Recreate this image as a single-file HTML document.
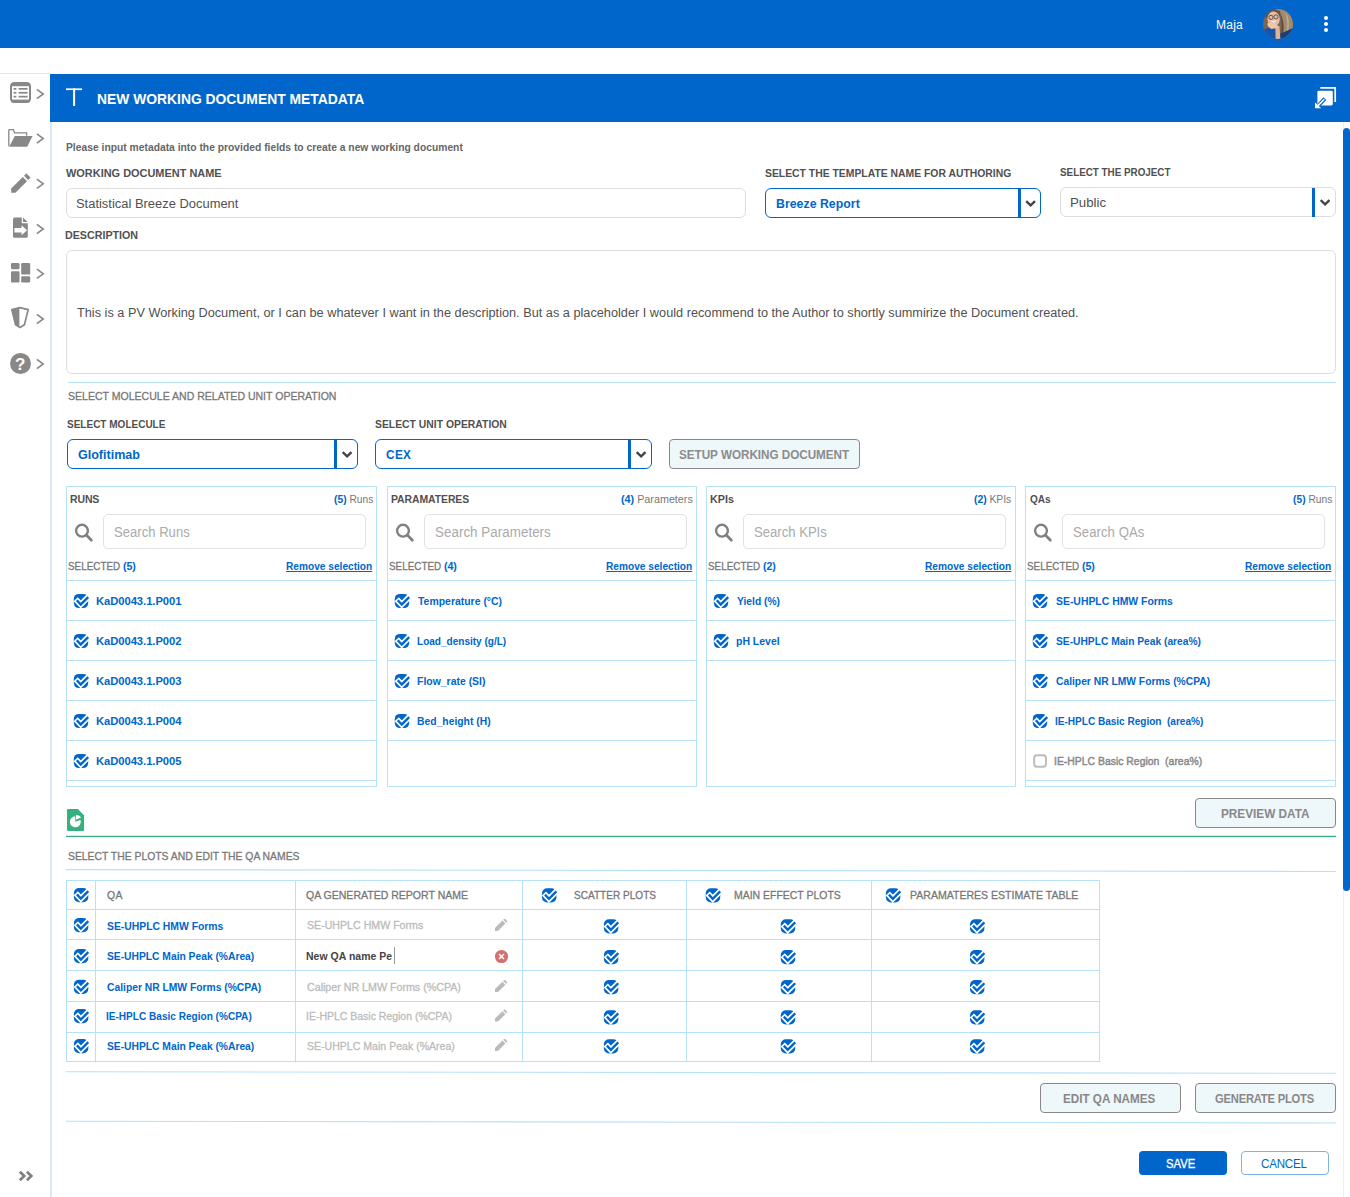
<!DOCTYPE html>
<html lang="en"><head><meta charset="utf-8"><title>New Working Document Metadata</title>
<style>
html,body{margin:0;padding:0;}
body{position:relative;width:1350px;height:1197px;overflow:hidden;background:#fff;font-family:"Liberation Sans",sans-serif;font-weight:bold;}
.t{position:absolute;white-space:pre;transform-origin:0 0;}
.t b{font-weight:bold;}
.t i{font-style:normal;font-weight:normal;}
svg{position:absolute;overflow:visible;}
.bl{color:#0066cc;}
.g7{color:#777;}

</style></head>
<body>
<svg width="0" height="0" style="position:absolute">
<defs>
<symbol id="ck" viewBox="0 0 16 15" overflow="visible">
<rect x="0" y="0.5" width="14.4" height="14.2" rx="5" fill="#0066cc"/>
<path d="M1.9 5.8 L6.95 11.05 L15.3 2.75" stroke="#fff" stroke-width="5.8" fill="none" stroke-linejoin="miter"/>
<path d="M2.98 6.88 L6.95 11.05 L14.4 3.65" stroke="#0066cc" stroke-width="2.35" fill="none" stroke-linejoin="miter"/>
</symbol>
<symbol id="chev" viewBox="0 0 10 12" overflow="visible">
<path d="M1 0.5 L8.5 6 L1 11.5" stroke="#888" stroke-width="1.9" fill="none"/>
</symbol>
<symbol id="dd" viewBox="0 0 10 6" overflow="visible">
<path d="M0.6 0.7 L5 5 L9.4 0.7" stroke="#444" stroke-width="2.3" fill="none" stroke-linejoin="miter"/>
</symbol>
<symbol id="srch" viewBox="0 0 18 18" overflow="visible">
<circle cx="7.1" cy="7.1" r="5.9" stroke="#808080" stroke-width="2.4" fill="none"/>
<path d="M11.4 11.4 L16.5 16.6" stroke="#808080" stroke-width="2.7" stroke-linecap="round"/>
</symbol>
<symbol id="pen" viewBox="0 0 12 12" overflow="visible">
<path d="M0 12 L0 9 L7.4 1.6 L10.4 4.6 L3 12 Z M8.2 0.8 L9 0 Q9.6 -0.4 10.2 0.1 L11.9 1.8 Q12.4 2.4 12 3 L11.2 3.8 Z" fill="#bbb"/>
</symbol>
</defs>
</svg>
<div style="position:absolute;left:0px;top:0px;width:1350px;height:48px;background:#0066cc;"></div>
<svg style="left:1263px;top:9px" width="30" height="30" viewBox="0 0 30 30"><defs><clipPath id="av"><circle cx="15" cy="15" r="15"/></clipPath></defs><g clip-path="url(#av)"><rect width="30" height="30" fill="#7b6654"/><path d="M13 0 Q30 0 30 16 L30 30 L19 30 Q22 20 19 10 Z" fill="#a08a70"/><path d="M22 3 Q28 10 25 22 L23 27 Q26 14 22 3Z" fill="#c2ad90"/><path d="M17 4 Q22 12 20 24 L18 26 Q20 14 17 4Z" fill="#5e4a3a"/><path d="M2 4 Q8 -2 17 2 L18 8 Q10 3 3 9 Z" fill="#6a5140"/><ellipse cx="10.6" cy="10" rx="6.2" ry="7.4" fill="#e6bea6"/><path d="M0 22 Q5 16 13 20 L14 30 L0 30Z" fill="#1c55a8"/><path d="M17 25 L30 19 L30 30 L16 30Z" fill="#1b3f7a"/><path d="M12.4 17.5 L16.4 16.8 L17.4 30 L12.6 30Z" fill="#e0b397"/><path d="M4.2 14.6 Q8 12.6 13.4 14.8 L15.4 18.4 L8.6 20 Q4.6 18.6 4.2 14.6Z" fill="#ecc6ae"/><circle cx="8" cy="8.4" r="2.1" fill="none" stroke="#4a382e" stroke-width="0.8"/><circle cx="13" cy="7.9" r="2.1" fill="none" stroke="#4a382e" stroke-width="0.8"/><path d="M8.4 12 Q10.6 13.8 12.8 11.8" fill="none" stroke="#fff" stroke-width="1"/></g></svg>
<div style="position:absolute;left:1324px;top:16px;width:4px;height:4px;background:#fff;border-radius:50%;"></div>
<div style="position:absolute;left:1324px;top:22px;width:4px;height:4px;background:#fff;border-radius:50%;"></div>
<div style="position:absolute;left:1324px;top:28px;width:4px;height:4px;background:#fff;border-radius:50%;"></div>
<div style="position:absolute;left:0px;top:73px;width:50px;height:1px;background:#dbe9fb;"></div>
<div style="position:absolute;left:50px;top:122px;width:2px;height:1075px;background:#dbe9fb;"></div>
<svg style="left:10px;top:82px" width="21" height="21" viewBox="0 0 21 21"><rect x="1" y="1" width="19" height="19" rx="3.2" fill="none" stroke="#888" stroke-width="2"/><rect x="1" y="1" width="19" height="3.2" fill="#888"/><rect x="1" y="17.6" width="19" height="2.6" fill="#888"/><g fill="#888"><rect x="3.6" y="6" width="2.8" height="1.7"/><rect x="8.6" y="6" width="9" height="1.7"/><rect x="3.6" y="9.9" width="2.8" height="1.7"/><rect x="8.6" y="9.9" width="9" height="1.7"/><rect x="3.6" y="13.8" width="2.8" height="1.7"/><rect x="8.6" y="13.8" width="9" height="1.7"/></g></svg>
<svg style="left:8px;top:128px" width="25" height="19" viewBox="0 0 25 19"><g transform="translate(0.00,0.80)"><path d="M0.8 17.5 L0.8 1.6 Q0.8 0.8 1.6 0.8 L5.4 0.8 L6.6 4 L18.6 4 L18.6 7" fill="none" stroke="#888" stroke-width="1.3"/><path d="M1.2 18 L6.8 7.2 L24.6 7.2 L19.2 18 Z" fill="#888"/></g></svg>
<svg style="left:11px;top:173px" width="20" height="20" viewBox="0 0 20 20"><path d="M0.2 19.8 L0.2 15.6 L11.8 4 L16 8.2 L4.4 19.8 Z" fill="#888"/><path d="M13 2.8 L15.4 0.4 L19.6 4.6 L17.2 7 Z" fill="#888"/></svg>
<svg style="left:13px;top:217px" width="15" height="21" viewBox="0 0 15 21"><path d="M1.6 0.4 L8.8 0.4 L8.8 6.2 L14.8 6.2 L14.8 19.2 Q14.8 20.8 13.2 20.8 L1.6 20.8 Q0 20.8 0 19.2 L0 2 Q0 0.4 1.6 0.4 Z" fill="#888"/><path d="M10 0.6 L14.6 5 L10 5 Z" fill="#888"/><path d="M1.4 11 L8.6 11 L8.6 8.2 L14 13.2 L8.6 18.2 L8.6 15.4 L1.4 15.4 Z" fill="#fff"/></svg>
<svg style="left:11px;top:263px" width="20" height="20" viewBox="0 0 20 20"><g fill="#888"><rect x="0" y="0" width="8.5" height="6.2" rx="1.2"/><rect x="0" y="8.3" width="8.5" height="11.2" rx="1.2"/><rect x="10.2" y="0" width="9" height="11.6" rx="1.2"/><rect x="10.2" y="13.3" width="9" height="6.2" rx="1.2"/></g></svg>
<svg style="left:11px;top:307px" width="18" height="21" viewBox="0 0 18 21"><path d="M9 0.6 L17.2 2.6 L13.4 17.8 L9 20.4 L4.6 17.8 L0.8 2.6 Z" fill="none" stroke="#888" stroke-width="1.7" stroke-linejoin="round"/><path d="M8.4 0.6 L0.4 2.6 L4.4 18 L8.4 20.4 Z" fill="#888"/></svg>
<div style="position:absolute;left:10px;top:352.5px;width:21px;height:21px;background:#888;border-radius:50%;"></div>
<svg style="left:36px;top:88px" width="8.5" height="11.4"><g transform="translate(0.00,0.30)"><use href="#chev"/></g></svg>
<svg style="left:36px;top:132px" width="8.5" height="11.4"><g transform="translate(0.00,0.80)"><use href="#chev"/></g></svg>
<svg style="left:36px;top:178px" width="8.5" height="11.4"><g transform="translate(0.00,0.10)"><use href="#chev"/></g></svg>
<svg style="left:36px;top:223px" width="8.5" height="11.4"><g transform="translate(0.00,0.30)"><use href="#chev"/></g></svg>
<svg style="left:36px;top:268px" width="8.5" height="11.4"><g transform="translate(0.00,0.10)"><use href="#chev"/></g></svg>
<svg style="left:36px;top:313px" width="8.5" height="11.4"><g transform="translate(0.00,0.30)"><use href="#chev"/></g></svg>
<svg style="left:36px;top:358px" width="8.5" height="11.4"><g transform="translate(0.00,0.30)"><use href="#chev"/></g></svg>
<svg style="left:18px;top:1170px" width="16" height="12" viewBox="0 0 16 12"><path d="M1.8 1.8 L6.2 6 L1.8 10.2 M8.9 1.8 L13.3 6 L8.9 10.2" fill="none" stroke="#808080" stroke-width="2.7"/></svg>
<div style="position:absolute;left:50px;top:74px;width:1300px;height:48px;background:#0066cc;"></div>
<svg style="left:66px;top:88px" width="17" height="19" viewBox="0 0 17 19"><rect x="0" y="0.4" width="16.1" height="1.7" fill="#fff"/><rect x="7.1" y="0.4" width="2" height="17.6" fill="#fff"/></svg>
<svg style="left:1315px;top:87px" width="22" height="22" viewBox="0 0 22 22"><path d="M5.3 0.9 L20.2 0.9 L20.2 15" fill="none" stroke="#fff" stroke-width="1.7"/><rect x="2.4" y="3.7" width="15.4" height="14.8" rx="1.4" fill="#fff"/><path d="M9.9 11.6 L2 20" stroke="#0066cc" stroke-width="3.8"/><path d="M0 21.2 L0 15.2 L6.2 21.2 Z" fill="#fff"/><path d="M9.3 12.2 L3 18.6" stroke="#fff" stroke-width="1.5"/></svg>
<div style="position:absolute;left:1343px;top:122px;width:7px;height:1075px;background:#fff;border-left:1px solid #eee;box-sizing:border-box;"></div>
<div style="position:absolute;left:1343px;top:128px;width:7px;height:763px;background:#0066cc;border-radius:3.5px;"></div>
<div style="position:absolute;left:66px;top:188px;width:680px;height:30px;border:1px solid #ddd;border-radius:6px;box-sizing:border-box;"></div>
<div style="position:absolute;left:765px;top:188px;width:276px;height:30px;border:1px solid #0066cc;border-radius:6px;box-sizing:border-box;"></div>
<div style="position:absolute;left:1018px;top:188.5px;width:3px;height:29px;background:#0066cc;"></div>
<svg style="left:1025px;top:200px" width="10" height="6"><g transform="translate(0.60,0.40)"><use href="#dd"/></g></svg>
<div style="position:absolute;left:1060px;top:187px;width:276px;height:30px;border:1px solid #ddd;border-radius:6px;box-sizing:border-box;"></div>
<div style="position:absolute;left:1312px;top:187.5px;width:3px;height:29px;background:#0066cc;"></div>
<svg style="left:1320px;top:199px" width="10" height="6"><g transform="translate(0.10,0.40)"><use href="#dd"/></g></svg>
<div style="position:absolute;left:66px;top:250px;width:1270px;height:124px;border:1px solid #ddd;border-radius:6px;box-sizing:border-box;"></div>
<div style="position:absolute;left:68px;top:382px;width:1268px;height:1px;background:#b5e1fa;"></div>
<div style="position:absolute;left:67px;top:439px;width:291px;height:30px;border:1px solid #0066cc;border-radius:6px;box-sizing:border-box;"></div>
<div style="position:absolute;left:334px;top:439.5px;width:3px;height:29px;background:#0066cc;"></div>
<svg style="left:342px;top:451px" width="10" height="6"><g transform="translate(0.10,0.40)"><use href="#dd"/></g></svg>
<div style="position:absolute;left:375px;top:439px;width:277px;height:30px;border:1px solid #0066cc;border-radius:6px;box-sizing:border-box;"></div>
<div style="position:absolute;left:628px;top:439.5px;width:3px;height:29px;background:#0066cc;"></div>
<svg style="left:636px;top:451px" width="10" height="6"><g transform="translate(0.10,0.40)"><use href="#dd"/></g></svg>
<div style="position:absolute;left:669px;top:439px;width:191px;height:30px;background:#eef7fa;border:1px solid #888;border-radius:4px;box-sizing:border-box;"></div>
<div style="position:absolute;left:66px;top:486px;width:311px;height:300.5px;border:1px solid #b5e1fa;box-sizing:border-box;"></div>
<svg style="left:74px;top:523px" width="18" height="18"><g transform="translate(0.90,0.60)"><use href="#srch"/></g></svg>
<div style="position:absolute;left:103px;top:514px;width:263px;height:35px;border:1px solid #e2e2e2;border-radius:5px;box-sizing:border-box;"></div>
<div style="position:absolute;left:66px;top:580px;width:311px;height:1px;background:#b5e1fa;"></div>
<svg style="left:73px;top:593px" width="16" height="15"><g transform="translate(0.80,0.40)"><use href="#ck"/></g></svg>
<div style="position:absolute;left:66px;top:620px;width:311px;height:1px;background:#b5e1fa;"></div>
<svg style="left:73px;top:633px" width="16" height="15"><g transform="translate(0.80,0.40)"><use href="#ck"/></g></svg>
<div style="position:absolute;left:66px;top:660px;width:311px;height:1px;background:#b5e1fa;"></div>
<svg style="left:73px;top:673px" width="16" height="15"><g transform="translate(0.80,0.40)"><use href="#ck"/></g></svg>
<div style="position:absolute;left:66px;top:700px;width:311px;height:1px;background:#b5e1fa;"></div>
<svg style="left:73px;top:713px" width="16" height="15"><g transform="translate(0.80,0.40)"><use href="#ck"/></g></svg>
<div style="position:absolute;left:66px;top:740px;width:311px;height:1px;background:#b5e1fa;"></div>
<svg style="left:73px;top:753px" width="16" height="15"><g transform="translate(0.80,0.40)"><use href="#ck"/></g></svg>
<div style="position:absolute;left:66px;top:780px;width:311px;height:1px;background:#b5e1fa;"></div>
<div style="position:absolute;left:387px;top:486px;width:310px;height:300.5px;border:1px solid #b5e1fa;box-sizing:border-box;"></div>
<svg style="left:395px;top:523px" width="18" height="18"><g transform="translate(0.90,0.60)"><use href="#srch"/></g></svg>
<div style="position:absolute;left:424px;top:514px;width:263px;height:35px;border:1px solid #e2e2e2;border-radius:5px;box-sizing:border-box;"></div>
<div style="position:absolute;left:387px;top:580px;width:310px;height:1px;background:#b5e1fa;"></div>
<svg style="left:394px;top:593px" width="16" height="15"><g transform="translate(0.80,0.40)"><use href="#ck"/></g></svg>
<div style="position:absolute;left:387px;top:620px;width:310px;height:1px;background:#b5e1fa;"></div>
<svg style="left:394px;top:633px" width="16" height="15"><g transform="translate(0.80,0.40)"><use href="#ck"/></g></svg>
<div style="position:absolute;left:387px;top:660px;width:310px;height:1px;background:#b5e1fa;"></div>
<svg style="left:394px;top:673px" width="16" height="15"><g transform="translate(0.80,0.40)"><use href="#ck"/></g></svg>
<div style="position:absolute;left:387px;top:700px;width:310px;height:1px;background:#b5e1fa;"></div>
<svg style="left:394px;top:713px" width="16" height="15"><g transform="translate(0.80,0.40)"><use href="#ck"/></g></svg>
<div style="position:absolute;left:387px;top:740px;width:310px;height:1px;background:#b5e1fa;"></div>
<div style="position:absolute;left:706px;top:486px;width:310px;height:300.5px;border:1px solid #b5e1fa;box-sizing:border-box;"></div>
<svg style="left:714px;top:523px" width="18" height="18"><g transform="translate(0.90,0.60)"><use href="#srch"/></g></svg>
<div style="position:absolute;left:743px;top:514px;width:263px;height:35px;border:1px solid #e2e2e2;border-radius:5px;box-sizing:border-box;"></div>
<div style="position:absolute;left:706px;top:580px;width:310px;height:1px;background:#b5e1fa;"></div>
<svg style="left:713px;top:593px" width="16" height="15"><g transform="translate(0.80,0.40)"><use href="#ck"/></g></svg>
<div style="position:absolute;left:706px;top:620px;width:310px;height:1px;background:#b5e1fa;"></div>
<svg style="left:713px;top:633px" width="16" height="15"><g transform="translate(0.80,0.40)"><use href="#ck"/></g></svg>
<div style="position:absolute;left:706px;top:660px;width:310px;height:1px;background:#b5e1fa;"></div>
<div style="position:absolute;left:1025px;top:486px;width:311px;height:300.5px;border:1px solid #b5e1fa;box-sizing:border-box;"></div>
<svg style="left:1033px;top:523px" width="18" height="18"><g transform="translate(0.90,0.60)"><use href="#srch"/></g></svg>
<div style="position:absolute;left:1062px;top:514px;width:263px;height:35px;border:1px solid #e2e2e2;border-radius:5px;box-sizing:border-box;"></div>
<div style="position:absolute;left:1025px;top:580px;width:311px;height:1px;background:#b5e1fa;"></div>
<svg style="left:1032px;top:593px" width="16" height="15"><g transform="translate(0.80,0.40)"><use href="#ck"/></g></svg>
<div style="position:absolute;left:1025px;top:620px;width:311px;height:1px;background:#b5e1fa;"></div>
<svg style="left:1032px;top:633px" width="16" height="15"><g transform="translate(0.80,0.40)"><use href="#ck"/></g></svg>
<div style="position:absolute;left:1025px;top:660px;width:311px;height:1px;background:#b5e1fa;"></div>
<svg style="left:1032px;top:673px" width="16" height="15"><g transform="translate(0.80,0.40)"><use href="#ck"/></g></svg>
<div style="position:absolute;left:1025px;top:700px;width:311px;height:1px;background:#b5e1fa;"></div>
<svg style="left:1032px;top:713px" width="16" height="15"><g transform="translate(0.80,0.40)"><use href="#ck"/></g></svg>
<div style="position:absolute;left:1025px;top:740px;width:311px;height:1px;background:#b5e1fa;"></div>
<svg style="left:1033px;top:754px" width="14" height="14" viewBox="0 0 14 14"><g transform="translate(0.20,0.30)"><rect x="1" y="1" width="11.8" height="11.4" rx="2.6" fill="none" stroke="#bdbdbd" stroke-width="2"/></g></svg>
<div style="position:absolute;left:1025px;top:780px;width:311px;height:1px;background:#b5e1fa;"></div>
<div style="position:absolute;left:1195px;top:798px;width:141px;height:30px;background:#eef7fa;border:1px solid #888;border-radius:4px;box-sizing:border-box;"></div>
<svg style="left:67px;top:808px" width="17.1" height="22" viewBox="0 0 17.1 22"><g transform="translate(0.00,0.90)"><path d="M1.2 0 L10.8 0 L17.1 6.3 L17.1 20.8 Q17.1 22 15.9 22 L1.2 22 Q0 22 0 20.8 L0 1.2 Q0 0 1.2 0Z" fill="#36b07f"/><path d="M8.3 12.9 L8.3 7.4 A5.5 5.5 0 1 0 13.47 11.02 Z" fill="#fff"/><path d="M9 10.9 L9 6.2 A5 5 0 0 1 14.1 8.7 Z" fill="#fff"/></g></svg>
<svg style="left:66px;top:835px" width="1270" height="3" viewBox="0 0 1270 3"><rect x="0" y="0.8" width="1270" height="1.3" fill="#36b07f"/></svg>
<svg style="left:66px;top:0px" width="1270" height="1197" viewBox="0 0 1270 1197"><line x1="0" y1="869.6" x2="1270" y2="871.5" stroke="#b5e1fa" stroke-width="1.1"/></svg>
<div style="position:absolute;left:66px;top:880px;width:1034px;height:182px;border:1px solid #b5e1fa;box-sizing:border-box;"></div>
<div style="position:absolute;left:66px;top:909px;width:1034px;height:1px;background:#b5e1fa;"></div>
<div style="position:absolute;left:66px;top:939px;width:1034px;height:1px;background:#b5e1fa;"></div>
<div style="position:absolute;left:66px;top:970px;width:1034px;height:1px;background:#b5e1fa;"></div>
<div style="position:absolute;left:66px;top:1001px;width:1034px;height:1px;background:#b5e1fa;"></div>
<div style="position:absolute;left:66px;top:1032px;width:1034px;height:1px;background:#b5e1fa;"></div>
<div style="position:absolute;left:95px;top:880px;width:1px;height:182px;background:#b5e1fa;"></div>
<div style="position:absolute;left:295px;top:880px;width:1px;height:182px;background:#b5e1fa;"></div>
<div style="position:absolute;left:522px;top:880px;width:1px;height:182px;background:#b5e1fa;"></div>
<div style="position:absolute;left:686px;top:880px;width:1px;height:182px;background:#b5e1fa;"></div>
<div style="position:absolute;left:871px;top:880px;width:1px;height:182px;background:#b5e1fa;"></div>
<svg style="left:73px;top:887px" width="16" height="15"><g transform="translate(0.90,0.50)"><use href="#ck"/></g></svg>
<svg style="left:542px;top:887px" width="16" height="15"><g transform="translate(0.00,0.70)"><use href="#ck"/></g></svg>
<svg style="left:705px;top:887px" width="16" height="15"><g transform="translate(0.80,0.70)"><use href="#ck"/></g></svg>
<svg style="left:885px;top:887px" width="16" height="15"><g transform="translate(0.90,0.70)"><use href="#ck"/></g></svg>
<svg style="left:73px;top:917px" width="16" height="15"><g transform="translate(0.90,0.50)"><use href="#ck"/></g></svg>
<svg style="left:495px;top:918px" width="12" height="12"><g transform="translate(0.00,0.90)"><use href="#pen"/></g></svg>
<svg style="left:603px;top:918px" width="16" height="15"><g transform="translate(0.90,0.70)"><use href="#ck"/></g></svg>
<svg style="left:780px;top:918px" width="16" height="15"><g transform="translate(0.80,0.70)"><use href="#ck"/></g></svg>
<svg style="left:970px;top:918px" width="16" height="15"><g transform="translate(0.00,0.70)"><use href="#ck"/></g></svg>
<svg style="left:73px;top:948px" width="16" height="15"><g transform="translate(0.90,0.50)"><use href="#ck"/></g></svg>
<div style="position:absolute;left:393.6px;top:947.0px;width:1px;height:17px;background:#999;"></div>
<svg style="left:494px;top:949px" width="13.2" height="13.2" viewBox="0 0 13.2 13.2"><g transform="translate(0.90,0.90)"><circle cx="6.6" cy="6.6" r="6.6" fill="#d66f70"/><path d="M4.1 4.1 L9.1 9.1 M9.1 4.1 L4.1 9.1" stroke="#fff" stroke-width="1.5"/></g></svg>
<svg style="left:603px;top:949px" width="16" height="15"><g transform="translate(0.90,0.50)"><use href="#ck"/></g></svg>
<svg style="left:780px;top:949px" width="16" height="15"><g transform="translate(0.80,0.50)"><use href="#ck"/></g></svg>
<svg style="left:970px;top:949px" width="16" height="15"><g transform="translate(0.00,0.50)"><use href="#ck"/></g></svg>
<svg style="left:73px;top:979px" width="16" height="15"><g transform="translate(0.90,0.30)"><use href="#ck"/></g></svg>
<svg style="left:495px;top:980px" width="12" height="12"><g transform="translate(0.00,0.10)"><use href="#pen"/></g></svg>
<svg style="left:603px;top:979px" width="16" height="15"><g transform="translate(0.90,0.60)"><use href="#ck"/></g></svg>
<svg style="left:780px;top:979px" width="16" height="15"><g transform="translate(0.80,0.60)"><use href="#ck"/></g></svg>
<svg style="left:970px;top:979px" width="16" height="15"><g transform="translate(0.00,0.60)"><use href="#ck"/></g></svg>
<svg style="left:73px;top:1008px" width="16" height="15"><g transform="translate(0.90,0.50)"><use href="#ck"/></g></svg>
<svg style="left:495px;top:1009px" width="12" height="12"><g transform="translate(0.00,0.60)"><use href="#pen"/></g></svg>
<svg style="left:603px;top:1009px" width="16" height="15"><g transform="translate(0.90,0.70)"><use href="#ck"/></g></svg>
<svg style="left:780px;top:1009px" width="16" height="15"><g transform="translate(0.80,0.70)"><use href="#ck"/></g></svg>
<svg style="left:970px;top:1009px" width="16" height="15"><g transform="translate(0.00,0.70)"><use href="#ck"/></g></svg>
<svg style="left:73px;top:1038px" width="16" height="15"><g transform="translate(0.90,0.50)"><use href="#ck"/></g></svg>
<svg style="left:495px;top:1039.0px" width="12" height="12"><use href="#pen"/></svg>
<svg style="left:603px;top:1038px" width="16" height="15"><g transform="translate(0.90,0.80)"><use href="#ck"/></g></svg>
<svg style="left:780px;top:1038px" width="16" height="15"><g transform="translate(0.80,0.80)"><use href="#ck"/></g></svg>
<svg style="left:970px;top:1038px" width="16" height="15"><g transform="translate(0.00,0.80)"><use href="#ck"/></g></svg>
<svg style="left:66px;top:0px" width="1270" height="1197" viewBox="0 0 1270 1197"><line x1="0" y1="1071.7" x2="1270" y2="1073.3" stroke="#b5e1fa" stroke-width="1.1"/></svg>
<div style="position:absolute;left:1040px;top:1083px;width:141px;height:30px;background:#eef7fa;border:1px solid #888;border-radius:4px;box-sizing:border-box;"></div>
<div style="position:absolute;left:1195px;top:1083px;width:141px;height:30px;background:#eef7fa;border:1px solid #888;border-radius:4px;box-sizing:border-box;"></div>
<svg style="left:66px;top:0px" width="1270" height="1197" viewBox="0 0 1270 1197"><line x1="0" y1="1121.3" x2="1270" y2="1123.0" stroke="#b5e1fa" stroke-width="1.1"/></svg>
<div style="position:absolute;left:1139px;top:1151px;width:88px;height:24px;background:#0066cc;border-radius:4px;"></div>
<div style="position:absolute;left:1241px;top:1151px;width:88px;height:24px;border:1px solid #7fb2e5;border-radius:4px;box-sizing:border-box;"></div>
<span class="t" style="left:1216px;top:18px;font-size:12px;line-height:14px;color:#fff;font-weight:normal;letter-spacing:0.263px;">Maja</span>
<span class="t" style="left:15px;top:355px;font-size:17px;line-height:19px;color:#fff;">?</span>
<span class="t" style="left:97.4px;top:90px;font-size:15.18px;line-height:17px;color:#fff;letter-spacing:0.004px;transform:scaleX(0.9131);">NEW WORKING DOCUMENT METADATA</span>
<span class="t" style="left:65.5px;top:141px;font-size:11.22px;line-height:12px;color:#666;letter-spacing:0.006px;transform:scaleX(0.9176);">Please input metadata into the provided fields to create a new working document</span>
<span class="t" style="left:65.9px;top:167px;font-size:11.44px;line-height:12px;color:#505050;transform:scaleX(0.9568);">WORKING DOCUMENT NAME</span>
<span class="t" style="left:76.0px;top:196px;font-size:13.26px;line-height:15px;color:#505050;font-weight:normal;transform:scaleX(0.9758);">Statistical Breeze Document</span>
<span class="t" style="left:765.0px;top:167px;font-size:11.44px;line-height:12px;color:#505050;transform:scaleX(0.9077);">SELECT THE TEMPLATE NAME FOR AUTHORING</span>
<span class="t" style="left:1060.0px;top:166px;font-size:11.44px;line-height:12px;color:#505050;transform:scaleX(0.8605);">SELECT THE PROJECT</span>
<span class="t" style="left:775.5px;top:196px;font-size:13.26px;line-height:15px;color:#0066cc;letter-spacing:0.040px;transform:scaleX(0.9270);">Breeze Report</span>
<span class="t" style="left:1070px;top:195px;font-size:13.26px;line-height:15px;color:#505050;font-weight:normal;letter-spacing:-0.010px;">Public</span>
<span class="t" style="left:64.9px;top:229px;font-size:11.44px;line-height:12px;color:#505050;transform:scaleX(0.9351);">DESCRIPTION</span>
<span class="t" style="left:77.0px;top:305px;font-size:13.26px;line-height:15px;color:#505050;font-weight:normal;letter-spacing:0.003px;transform:scaleX(0.9602);">This is a PV Working Document, or I can be whatever I want in the description. But as a placeholder I would recommend to the Author to shortly summirize the Document created.</span>
<span class="t" style="left:68.0px;top:390px;font-size:11.44px;line-height:12px;color:#777;font-weight:normal;transform:scaleX(0.9210);-webkit-text-stroke:0.3px #777;">SELECT MOLECULE AND RELATED UNIT OPERATION</span>
<span class="t" style="left:67.0px;top:418px;font-size:11.44px;line-height:12px;color:#505050;transform:scaleX(0.8750);">SELECT MOLECULE</span>
<span class="t" style="left:375.0px;top:418px;font-size:11.44px;line-height:12px;color:#505050;letter-spacing:0.010px;transform:scaleX(0.9062);">SELECT UNIT OPERATION</span>
<span class="t" style="left:78.0px;top:447px;font-size:13.26px;line-height:15px;color:#0066cc;letter-spacing:-0.021px;transform:scaleX(0.9477);">Glofitimab</span>
<span class="t" style="left:386.2px;top:447px;font-size:13.52px;line-height:15px;color:#0066cc;letter-spacing:0.467px;transform:scaleX(0.8679);">CEX</span>
<span class="t" style="left:678.8px;top:448px;font-size:12.48px;line-height:14px;color:#8c8c8c;letter-spacing:-0.027px;transform:scaleX(0.9381);">SETUP WORKING DOCUMENT</span>
<span class="t" style="left:70.2px;top:493px;font-size:11.44px;line-height:12px;color:#505050;letter-spacing:-0.163px;transform:scaleX(0.9194);">RUNS</span>
<span class="t" style="left:333.7px;top:493px;font-size:11.22px;line-height:12px;color:#505050;letter-spacing:0.042px;transform:scaleX(0.9093);"><b class="bl">(5)</b><i class="g7"> Runs</i></span>
<span class="t" style="left:114.1px;top:524px;font-size:14.28px;line-height:16px;color:#aaa;font-weight:normal;letter-spacing:0.030px;transform:scaleX(0.9148);">Search Runs</span>
<span class="t" style="left:68.0px;top:560px;font-size:11.44px;line-height:12px;color:#777;font-weight:normal;letter-spacing:0.015px;transform:scaleX(0.8617);-webkit-text-stroke:0.3px #777;">SELECTED</span>
<span class="t" style="left:123.0px;top:560px;font-size:11px;line-height:12px;color:#0066cc;letter-spacing:-0.093px;transform:scaleX(0.9692);">(5)</span>
<span class="t" style="left:285.9px;top:560px;font-size:11.22px;line-height:12px;color:#0066cc;letter-spacing:0.007px;transform:scaleX(0.9031);text-decoration:underline;text-underline-offset:0.5px;text-decoration-thickness:1px;">Remove selection</span>
<span class="t" style="left:96px;top:595px;font-size:11.22px;line-height:12px;color:#0066cc;letter-spacing:-0.048px;">KaD0043.1.P001</span>
<span class="t" style="left:96px;top:635px;font-size:11.22px;line-height:12px;color:#0066cc;letter-spacing:-0.048px;">KaD0043.1.P002</span>
<span class="t" style="left:96px;top:675px;font-size:11.22px;line-height:12px;color:#0066cc;letter-spacing:-0.048px;">KaD0043.1.P003</span>
<span class="t" style="left:96px;top:715px;font-size:11.22px;line-height:12px;color:#0066cc;letter-spacing:-0.048px;">KaD0043.1.P004</span>
<span class="t" style="left:96px;top:755px;font-size:11.22px;line-height:12px;color:#0066cc;letter-spacing:-0.048px;">KaD0043.1.P005</span>
<span class="t" style="left:391.2px;top:493px;font-size:11.44px;line-height:12px;color:#505050;letter-spacing:-0.079px;transform:scaleX(0.9106);">PARAMATERES</span>
<span class="t" style="left:621.0px;top:493px;font-size:11.22px;line-height:12px;color:#505050;transform:scaleX(0.9600);"><b class="bl">(4)</b><i class="g7"> Parameters</i></span>
<span class="t" style="left:435.1px;top:524px;font-size:14.28px;line-height:16px;color:#aaa;font-weight:normal;letter-spacing:0.030px;transform:scaleX(0.9385);">Search Parameters</span>
<span class="t" style="left:389.0px;top:560px;font-size:11.44px;line-height:12px;color:#777;font-weight:normal;letter-spacing:0.015px;transform:scaleX(0.8617);-webkit-text-stroke:0.3px #777;">SELECTED</span>
<span class="t" style="left:444.0px;top:560px;font-size:11px;line-height:12px;color:#0066cc;letter-spacing:-0.093px;transform:scaleX(0.9692);">(4)</span>
<span class="t" style="left:605.9px;top:560px;font-size:11.22px;line-height:12px;color:#0066cc;letter-spacing:0.007px;transform:scaleX(0.9031);text-decoration:underline;text-underline-offset:0.5px;text-decoration-thickness:1px;">Remove selection</span>
<span class="t" style="left:417.5px;top:595px;font-size:11.22px;line-height:12px;color:#0066cc;letter-spacing:0.006px;transform:scaleX(0.9300);">Temperature (°C)</span>
<span class="t" style="left:416.5px;top:635px;font-size:11.22px;line-height:12px;color:#0066cc;letter-spacing:-0.018px;transform:scaleX(0.8969);">Load_density (g/L)</span>
<span class="t" style="left:416.5px;top:675px;font-size:11.22px;line-height:12px;color:#0066cc;transform:scaleX(0.9306);">Flow_rate (SI)</span>
<span class="t" style="left:416.5px;top:715px;font-size:11.22px;line-height:12px;color:#0066cc;transform:scaleX(0.9231);">Bed_height (H)</span>
<span class="t" style="left:710.2px;top:493px;font-size:11.22px;line-height:12px;color:#505050;transform:scaleX(0.9583);">KPIs</span>
<span class="t" style="left:974.4px;top:493px;font-size:11.22px;line-height:12px;color:#505050;letter-spacing:-0.055px;transform:scaleX(0.9300);"><b class="bl">(2)</b><i class="g7"> KPIs</i></span>
<span class="t" style="left:754.1px;top:524px;font-size:14.28px;line-height:16px;color:#aaa;font-weight:normal;letter-spacing:-0.029px;transform:scaleX(0.9218);">Search KPIs</span>
<span class="t" style="left:708.0px;top:560px;font-size:11.44px;line-height:12px;color:#777;font-weight:normal;letter-spacing:0.015px;transform:scaleX(0.8617);-webkit-text-stroke:0.3px #777;">SELECTED</span>
<span class="t" style="left:763.0px;top:560px;font-size:11px;line-height:12px;color:#0066cc;letter-spacing:-0.093px;transform:scaleX(0.9692);">(2)</span>
<span class="t" style="left:924.9px;top:560px;font-size:11.22px;line-height:12px;color:#0066cc;letter-spacing:0.007px;transform:scaleX(0.9031);text-decoration:underline;text-underline-offset:0.5px;text-decoration-thickness:1px;">Remove selection</span>
<span class="t" style="left:736.5px;top:595px;font-size:11.22px;line-height:12px;color:#0066cc;transform:scaleX(0.9149);">Yield (%)</span>
<span class="t" style="left:735.5px;top:635px;font-size:11.22px;line-height:12px;color:#0066cc;transform:scaleX(0.9333);">pH Level</span>
<span class="t" style="left:1030.2px;top:493px;font-size:11.22px;line-height:12px;color:#505050;letter-spacing:-0.100px;transform:scaleX(0.8957);">QAs</span>
<span class="t" style="left:1292.7px;top:493px;font-size:11.22px;line-height:12px;color:#505050;letter-spacing:0.042px;transform:scaleX(0.9093);"><b class="bl">(5)</b><i class="g7"> Runs</i></span>
<span class="t" style="left:1073.1px;top:524px;font-size:14.28px;line-height:16px;color:#aaa;font-weight:normal;letter-spacing:0.076px;transform:scaleX(0.9197);">Search QAs</span>
<span class="t" style="left:1027.0px;top:560px;font-size:11.44px;line-height:12px;color:#777;font-weight:normal;letter-spacing:0.015px;transform:scaleX(0.8617);-webkit-text-stroke:0.3px #777;">SELECTED</span>
<span class="t" style="left:1082.0px;top:560px;font-size:11px;line-height:12px;color:#0066cc;letter-spacing:-0.093px;transform:scaleX(0.9692);">(5)</span>
<span class="t" style="left:1244.9px;top:560px;font-size:11.22px;line-height:12px;color:#0066cc;letter-spacing:0.007px;transform:scaleX(0.9031);text-decoration:underline;text-underline-offset:0.5px;text-decoration-thickness:1px;">Remove selection</span>
<span class="t" style="left:1055.5px;top:595px;font-size:11.22px;line-height:12px;color:#0066cc;transform:scaleX(0.9286);">SE-UHPLC HMW Forms</span>
<span class="t" style="left:1055.5px;top:635px;font-size:11.22px;line-height:12px;color:#0066cc;transform:scaleX(0.9119);">SE-UHPLC Main Peak (area%)</span>
<span class="t" style="left:1055.5px;top:675px;font-size:11.22px;line-height:12px;color:#0066cc;transform:scaleX(0.9167);">Caliper NR LMW Forms (%CPA)</span>
<span class="t" style="left:1054.5px;top:715px;font-size:11.22px;line-height:12px;color:#0066cc;letter-spacing:-0.029px;transform:scaleX(0.8988);">IE-HPLC Basic Region  (area%)</span>
<span class="t" style="left:1054.0px;top:755px;font-size:11.22px;line-height:12px;color:#888;font-weight:normal;letter-spacing:0.007px;transform:scaleX(0.9270);-webkit-text-stroke:0.45px #888;">IE-HPLC Basic Region  (area%)</span>
<span class="t" style="left:1220.8px;top:806px;font-size:13.0px;line-height:15px;color:#888;transform:scaleX(0.9062);">PREVIEW DATA</span>
<span class="t" style="left:68.0px;top:850px;font-size:11.44px;line-height:12px;color:#777;font-weight:normal;letter-spacing:-0.016px;transform:scaleX(0.9090);-webkit-text-stroke:0.3px #777;">SELECT THE PLOTS AND EDIT THE QA NAMES</span>
<span class="t" style="left:107.3px;top:889px;font-size:11.44px;line-height:12px;color:#777;font-weight:normal;letter-spacing:0.494px;transform:scaleX(0.9118);-webkit-text-stroke:0.3px #777;">QA</span>
<span class="t" style="left:306.4px;top:889px;font-size:11.44px;line-height:12px;color:#777;font-weight:normal;transform:scaleX(0.9205);-webkit-text-stroke:0.3px #777;">QA GENERATED REPORT NAME</span>
<span class="t" style="left:574.0px;top:889px;font-size:11.44px;line-height:12px;color:#777;font-weight:normal;letter-spacing:0.009px;transform:scaleX(0.8785);-webkit-text-stroke:0.3px #777;">SCATTER PLOTS</span>
<span class="t" style="left:734.1px;top:889px;font-size:11.44px;line-height:12px;color:#777;font-weight:normal;letter-spacing:-0.006px;transform:scaleX(0.9157);-webkit-text-stroke:0.3px #777;">MAIN EFFECT PLOTS</span>
<span class="t" style="left:909.6px;top:889px;font-size:11.44px;line-height:12px;color:#777;font-weight:normal;letter-spacing:0.024px;transform:scaleX(0.9187);-webkit-text-stroke:0.3px #777;">PARAMATERES ESTIMATE TABLE</span>
<span class="t" style="left:107.3px;top:920px;font-size:11.22px;line-height:12px;color:#0066cc;letter-spacing:-0.011px;transform:scaleX(0.9254);">SE-UHPLC HMW Forms</span>
<span class="t" style="left:307.0px;top:919px;font-size:11.22px;line-height:12px;color:#bbb;font-weight:normal;letter-spacing:-0.011px;transform:scaleX(0.9480);-webkit-text-stroke:0.3px #bbb;">SE-UHPLC HMW Forms</span>
<span class="t" style="left:107.3px;top:950px;font-size:11.22px;line-height:12px;color:#0066cc;letter-spacing:-0.027px;transform:scaleX(0.9194);">SE-UHPLC Main Peak (%Area)</span>
<span class="t" style="left:306.2px;top:950px;font-size:11.22px;line-height:12px;color:#444;letter-spacing:0.060px;transform:scaleX(0.9297);">New QA name Pe</span>
<span class="t" style="left:107.3px;top:981px;font-size:11.22px;line-height:12px;color:#0066cc;letter-spacing:-0.004px;transform:scaleX(0.9185);">Caliper NR LMW Forms (%CPA)</span>
<span class="t" style="left:307.0px;top:981px;font-size:11.22px;line-height:12px;color:#bbb;font-weight:normal;letter-spacing:-0.036px;transform:scaleX(0.9565);-webkit-text-stroke:0.3px #bbb;">Caliper NR LMW Forms (%CPA)</span>
<span class="t" style="left:106.3px;top:1010px;font-size:11.22px;line-height:12px;color:#0066cc;letter-spacing:-0.008px;transform:scaleX(0.8981);">IE-HPLC Basic Region (%CPA)</span>
<span class="t" style="left:306.0px;top:1010px;font-size:11.22px;line-height:12px;color:#bbb;font-weight:normal;letter-spacing:0.004px;transform:scaleX(0.9335);-webkit-text-stroke:0.3px #bbb;">IE-HPLC Basic Region (%CPA)</span>
<span class="t" style="left:107.3px;top:1040px;font-size:11.22px;line-height:12px;color:#0066cc;letter-spacing:-0.027px;transform:scaleX(0.9194);">SE-UHPLC Main Peak (%Area)</span>
<span class="t" style="left:307.0px;top:1040px;font-size:11.22px;line-height:12px;color:#bbb;font-weight:normal;letter-spacing:0.023px;transform:scaleX(0.9376);-webkit-text-stroke:0.3px #bbb;">SE-UHPLC Main Peak (%Area)</span>
<span class="t" style="left:1062.9px;top:1091px;font-size:13.0px;line-height:15px;color:#888;letter-spacing:0.017px;transform:scaleX(0.8961);">EDIT QA NAMES</span>
<span class="t" style="left:1214.9px;top:1091px;font-size:13.0px;line-height:15px;color:#888;letter-spacing:-0.222px;transform:scaleX(0.8600);">GENERATE PLOTS</span>
<span class="t" style="left:1165.9px;top:1156px;font-size:13.0px;line-height:15px;color:#fff;font-weight:normal;letter-spacing:0.034px;transform:scaleX(0.8697);-webkit-text-stroke:0.3px #fff;">SAVE</span>
<span class="t" style="left:1261.0px;top:1156px;font-size:13.0px;line-height:15px;color:#0066cc;font-weight:normal;letter-spacing:-0.222px;transform:scaleX(0.8904);">CANCEL</span>
</body></html>
